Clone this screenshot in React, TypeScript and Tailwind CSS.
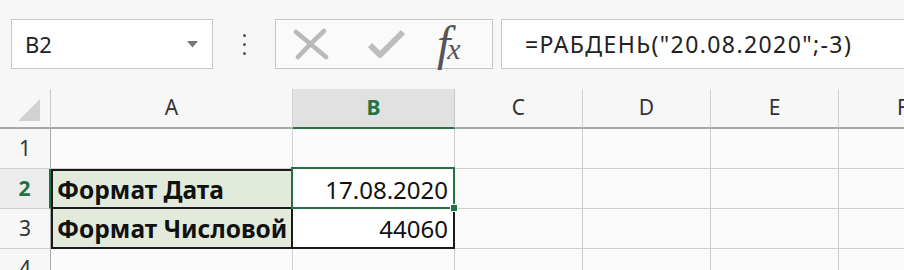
import React from 'react';

const cols = ['A', 'B', 'C', 'D', 'E', 'F'];

const App: React.FC = () => {
  return (
    <div className="w-[904px] h-[270px] overflow-hidden bg-[#f7f7f7] text-[#222]" style={{ fontFamily: '"Noto Sans", "Open Sans", sans-serif' }}>
      {/* formula bar */}
      <div className="flex items-start h-[89px] pt-[19px]">
        <div className="ml-[11px] w-[202px] h-[50px] bg-white border border-[#c6c6c6] flex items-center justify-between pl-[13px] pr-[14px]">
          <span className="text-[22px] text-[#222]">B2</span>
          <svg width="11" height="7" viewBox="0 0 11 7"><path d="M0 0 L11 0 L5.5 6.5 Z" fill="#777" /></svg>
        </div>
        <div className="w-[62px] h-[50px] flex flex-col items-center justify-center gap-[6px]">
          <div className="w-[3px] h-[3px] bg-[#555] rounded-full" />
          <div className="w-[3px] h-[3px] bg-[#555] rounded-full" />
          <div className="w-[3px] h-[3px] bg-[#555] rounded-full" />
        </div>
        <div className="w-[218px] h-[50px] bg-[#fafafa] border border-[#c6c6c6] flex items-center">
          <svg className="ml-[17px]" width="36" height="34" viewBox="0 0 36 34">
            <path d="M3 5 Q14 14 33 30 M31 4 Q18 16 5 30" stroke="#b9b9b9" strokeWidth="4.5" fill="none" strokeLinecap="round" />
          </svg>
          <svg className="ml-[38px]" width="40" height="34" viewBox="0 0 40 34">
            <path d="M3 18 L13 28 L36 5" stroke="#bdbdbd" strokeWidth="6" fill="none" strokeLinejoin="round" />
          </svg>
          <div className="ml-[30px] flex items-end text-[#555] italic" style={{ fontFamily: '"Liberation Serif", serif' }}>
            <span className="text-[48px] leading-none">f</span>
            <span className="text-[30px] leading-none -ml-[3px] mb-[4px]">x</span>
          </div>
        </div>
        <div className="ml-[8px] flex-1 h-[50px] bg-white border border-[#c6c6c6] border-r-0 flex items-center pl-[23px]">
          <span className="text-[23px] tracking-[1.4px] text-[#222] whitespace-nowrap">=РАБДЕНЬ("20.08.2020";-3)</span>
        </div>
      </div>

      {/* grid */}
      <div className="grid w-[967px] grid-cols-[51px_242px_162px_128px_128px_128px_128px] grid-rows-[40px_40px_40px_40px_40px]">
        {/* header row */}
        <div className="border-b-2 border-[#a8a8a8] border-r border-r-[#c8c8c8] flex items-end justify-end pr-[10px] pb-[6px]">
          <svg width="22" height="22" viewBox="0 0 22 22"><path d="M22 0 L22 22 L0 22 Z" fill="#d2d2d2" /></svg>
        </div>
        {cols.map((c) => (
          <div
            key={c}
            className={
              c === 'B'
                ? 'bg-[#e1e1e1] border-b-2 border-b-[#217346] border-r border-r-[#c8c8c8] flex items-center justify-center text-[21px] font-bold text-[#217346]'
                : 'border-b-2 border-b-[#a8a8a8] border-r border-r-[#d0d0d0] flex items-center justify-center text-[21px] text-[#333]'
            }
          >
            {c}
          </div>
        ))}

        {/* rows */}
        {[1, 2, 3, 4].map((r) => (
          <React.Fragment key={r}>
            <div
              className={
                r === 2
                  ? 'bg-[#ececec] border-r-2 border-r-[#217346] border-b border-b-[#cfcfcf] flex items-center justify-center text-[21px] font-bold text-[#217346]'
                  : 'border-r border-r-[#a8a8a8] border-b border-b-[#cfcfcf] flex items-center justify-center text-[21px] text-[#333]'
              }
            >
              {r}
            </div>
            {cols.map((c) => {
              if (c === 'A' && (r === 2 || r === 3)) {
                return (
                  <div
                    key={c}
                    className={`bg-[#e2ebdb] border-2 border-[#1a1a1a] ${r === 3 ? 'border-t-0' : ''} flex items-center pl-[4px] pt-[2px] text-[24.5px] font-bold text-[#111] whitespace-nowrap overflow-hidden`}
                  >
                    {r === 2 ? 'Формат Дата' : 'Формат Числовой'}
                  </div>
                );
              }
              if (c === 'B' && r === 2) {
                return (
                  <div key={c} className="relative bg-white border-b border-r border-[#cfcfcf] flex items-center justify-end pr-[6px] pt-[2px] text-[24px] text-[#111]">
                    17.08.2020
                    <div className="absolute -left-[2px] -top-[2px] -right-[1px] -bottom-[1px] border-2 border-[#217346]" />
                    <div className="absolute -right-[4px] -bottom-[4px] w-[8px] h-[8px] bg-[#217346] border border-white" />
                  </div>
                );
              }
              if (c === 'B' && r === 3) {
                return (
                  <div key={c} className="bg-white border-2 border-t-0 border-l-0 border-[#1a1a1a] flex items-center justify-end pr-[5px] pt-[2px] text-[24px] text-[#111]">
                    44060
                  </div>
                );
              }
              return <div key={c} className="bg-[#fbfbfb] border-b border-r border-[#cfcfcf]" />;
            })}
          </React.Fragment>
        ))}
      </div>
    </div>
  );
};

export default App;
